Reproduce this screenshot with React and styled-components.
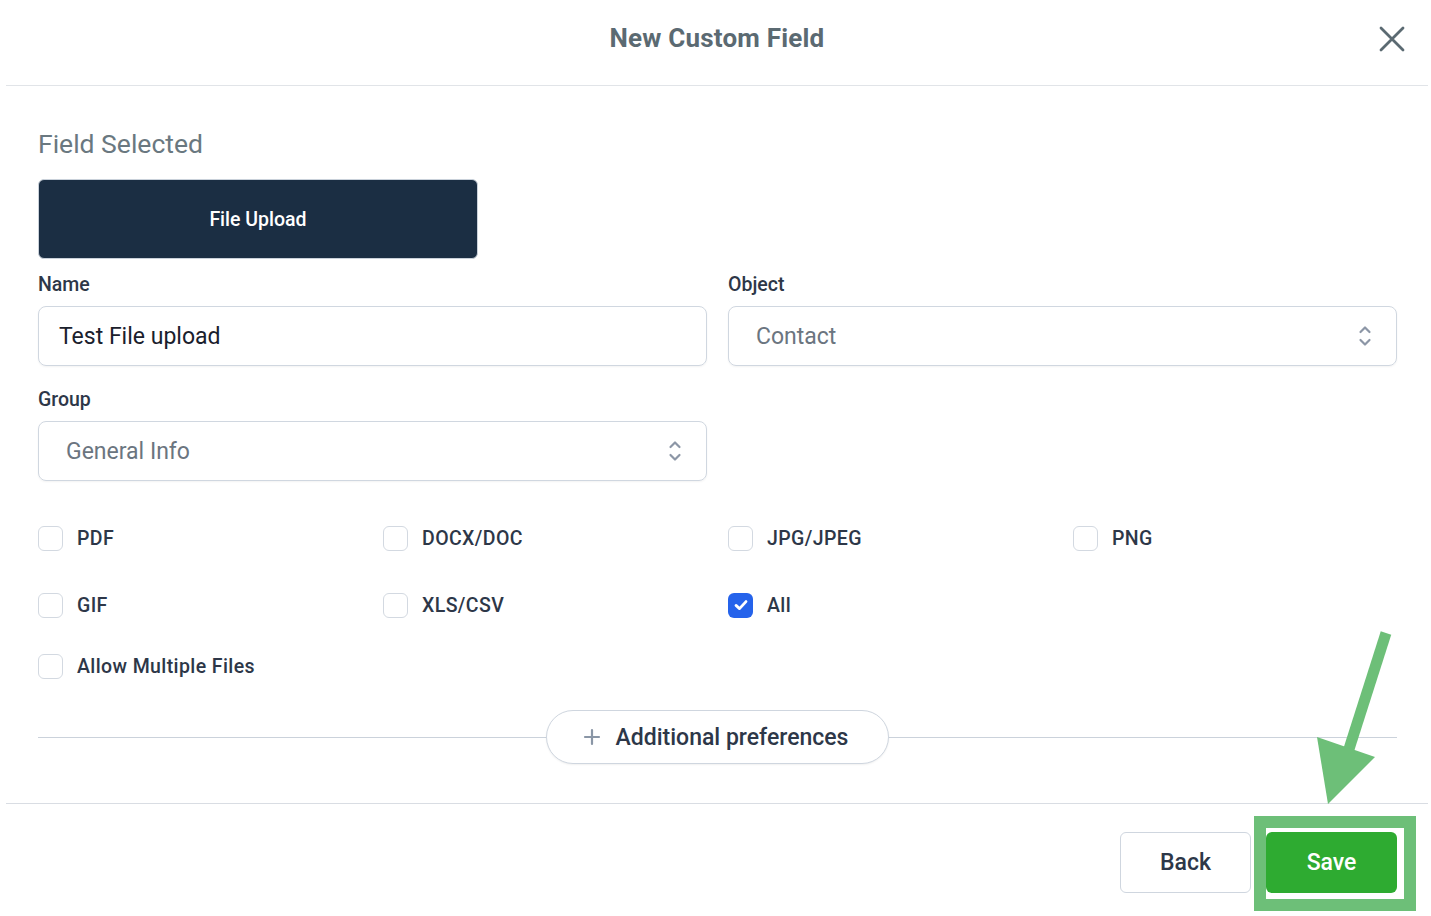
import styled, { createGlobalStyle } from "styled-components";

const GlobalStyle = createGlobalStyle`
  body {
    margin: 0;
    background: #ffffff;
    font-family: Roboto, "Noto Sans", "Liberation Sans", sans-serif;
  }
`;

const FILE_TYPES = [
  { label: "PDF" },
  { label: "DOCX/DOC" },
  { label: "JPG/JPEG" },
  { label: "PNG" },
  { label: "GIF" },
  { label: "XLS/CSV" },
  { label: "All", checked: true },
];

const Chevrons = () => (
  <svg width="14" height="24" viewBox="0 0 14 24" fill="none">
    <path d="M2.5 8 L7 3.5 L11.5 8" stroke="#8c96a6" strokeWidth="2.2" strokeLinecap="round" strokeLinejoin="round" />
    <path d="M2.5 16 L7 20.5 L11.5 16" stroke="#8c96a6" strokeWidth="2.2" strokeLinecap="round" strokeLinejoin="round" />
  </svg>
);

const Check = () => (
  <svg width="18" height="18" viewBox="0 0 18 18" fill="none">
    <path d="M4 9.4 L7.5 12.6 L14 5.6" stroke="#fff" strokeWidth="2.8" strokeLinecap="round" strokeLinejoin="round" />
  </svg>
);

const CheckItem = ({ label, checked }) => (
  <CheckRow>
    <Box $checked={checked}>{checked && <Check />}</Box>
    <CheckLabel>{label}</CheckLabel>
  </CheckRow>
);

const App = () => {
  return (
    <>
      <GlobalStyle />
      <Modal>
        <Header>
          <Title>New Custom Field</Title>
          <CloseBtn aria-label="close">
            <svg width="26" height="26" viewBox="0 0 26 26" fill="none">
              <path d="M2 2 L24 24 M24 2 L2 24" stroke="#5b6a72" strokeWidth="2.8" strokeLinecap="round" />
            </svg>
          </CloseBtn>
        </Header>

        <Body>
          <SectionTitle>Field Selected</SectionTitle>
          <TypeButton>File Upload</TypeButton>

          <FieldGrid>
            <Field>
              <Label>Name</Label>
              <Input>Test File upload</Input>
            </Field>
            <Field>
              <Label>Object</Label>
              <Select>
                <span>Contact</span>
                <Chevrons />
              </Select>
            </Field>
            <Field>
              <Label>Group</Label>
              <Select>
                <span>General Info</span>
                <Chevrons />
              </Select>
            </Field>
          </FieldGrid>

          <CheckGrid>
            {FILE_TYPES.map((t) => (
              <CheckItem key={t.label} label={t.label} checked={t.checked} />
            ))}
          </CheckGrid>
          <MultipleRow>
            <CheckItem label="Allow Multiple Files" />
          </MultipleRow>

          <PrefRow>
            <PrefPill>
              <svg width="18" height="18" viewBox="0 0 18 18" fill="none">
                <path d="M9 2 V16 M2 9 H16" stroke="#8a96a6" strokeWidth="2.2" strokeLinecap="round" />
              </svg>
              Additional preferences
            </PrefPill>
          </PrefRow>
        </Body>

        <Footer>
          <BackButton>Back</BackButton>
          <SaveButton>Save</SaveButton>
        </Footer>
      </Modal>

      <Highlight />
      <Arrow width="90" height="185" viewBox="0 0 90 185">
        <path d="M73 2 L36 118" stroke="#6dbf78" strokeWidth="11" />
        <polygon points="4,106 62,126 15,173" fill="#6dbf78" />
      </Arrow>
    </>
  );
};

export default App;

const Modal = styled.div`
  margin: 0 3px 0 6px;
  background: #fff;
  color: #2d3748;
`;

const Header = styled.div`
  position: relative;
  height: 86px;
  border-bottom: 1px solid #e1e4e8;
  display: flex;
  align-items: center;
  justify-content: center;
  padding-bottom: 10px;
  box-sizing: border-box;
`;

const Title = styled.h1`
  margin: 0;
  font-size: 26px;
  font-weight: 700;
  color: #5b6a72;
  letter-spacing: 0.2px;
`;

const CloseBtn = styled.button`
  position: absolute;
  right: 23px;
  top: 26px;
  border: 0;
  background: none;
  padding: 0;
  display: flex;
`;

const Body = styled.div`
  padding: 43px 31px 39px 32px;
  border-bottom: 1px solid #d9dde3;
`;

const SectionTitle = styled.h2`
  margin: 0;
  font-size: 26.5px;
  line-height: 30px;
  font-weight: 400;
  color: #6a7880;
`;

const TypeButton = styled.div`
  margin-top: 20px;
  width: 440px;
  height: 80px;
  box-sizing: border-box;
  background: #1b2e43;
  border: 1px solid #c9d1da;
  border-radius: 6px;
  color: #fff;
  font-size: 19.5px;
  font-weight: 500;
  display: flex;
  align-items: center;
  justify-content: center;
`;

const FieldGrid = styled.div`
  margin-top: 15px;
  display: grid;
  grid-template-columns: 1fr 1fr;
  column-gap: 21px;
  row-gap: 23px;
`;

const Field = styled.div`
  display: flex;
  flex-direction: column;
  gap: 10px;
`;

const Label = styled.div`
  font-size: 19.5px;
  line-height: 22px;
  font-weight: 500;
  color: #2d3748;
`;

const Input = styled.div`
  height: 60px;
  box-sizing: border-box;
  border: 1.5px solid #d0d7e0;
  border-radius: 8px;
  padding: 0 20px;
  display: flex;
  align-items: center;
  font-size: 23px;
  color: #1a202c;
  box-shadow: 0 1px 2px rgba(0, 0, 0, 0.05);
`;

const Select = styled(Input)`
  justify-content: space-between;
  padding: 0 24px 0 27px;
  color: #6b7580;
`;

const CheckGrid = styled.div`
  margin-top: 45px;
  display: grid;
  grid-template-columns: repeat(4, 345px);
  row-gap: 43px;
`;

const MultipleRow = styled.div`
  margin-top: 37px;
`;

const CheckRow = styled.div`
  display: flex;
  align-items: center;
  gap: 14px;
  height: 24px;
`;

const Box = styled.div`
  width: 25px;
  height: 25px;
  box-sizing: border-box;
  border-radius: 6px;
  border: ${(p) => (p.$checked ? "none" : "1.5px solid #d3d9e1")};
  background: ${(p) => (p.$checked ? "#2563eb" : "#fff")};
  display: flex;
  align-items: center;
  justify-content: center;
  flex-shrink: 0;
`;

const CheckLabel = styled.span`
  font-size: 19.5px;
  font-weight: 500;
  color: #2d3748;
  letter-spacing: 0.4px;
`;

const PrefRow = styled.div`
  margin-top: 32px;
  display: flex;
  align-items: center;
  justify-content: center;
  position: relative;
  &::before {
    content: "";
    position: absolute;
    left: 0;
    right: 0;
    top: 50%;
    height: 1px;
    background: #cbd2db;
  }
`;

const PrefPill = styled.div`
  position: relative;
  height: 54px;
  width: 343px;
  box-sizing: border-box;
  border: 1.5px solid #cfd6df;
  border-radius: 27px;
  background: #fff;
  display: flex;
  align-items: center;
  justify-content: center;
  gap: 15px;
  padding-right: 4px;
  font-size: 23px;
  font-weight: 500;
  color: #2d3748;
  box-shadow: 0 1px 2px rgba(0, 0, 0, 0.06);
`;

const Footer = styled.div`
  display: flex;
  justify-content: flex-end;
  gap: 15px;
  padding: 28px 31px 23px 0;
`;

const BaseButton = styled.button`
  height: 61px;
  width: 131px;
  border-radius: 6px;
  font-family: inherit;
  font-size: 23px;
  font-weight: 500;
`;

const BackButton = styled(BaseButton)`
  background: #fff;
  border: 1.5px solid #cfd6df;
  color: #2d3748;
`;

const SaveButton = styled(BaseButton)`
  background: #2eab31;
  border: none;
  color: #fff;
`;

const Highlight = styled.div`
  position: absolute;
  left: 1254px;
  top: 816px;
  width: 162px;
  height: 95px;
  box-sizing: border-box;
  border: 12px solid #6dbf78;
  pointer-events: none;
`;

const Arrow = styled.svg`
  position: absolute;
  left: 1313px;
  top: 631px;
  pointer-events: none;
`;
